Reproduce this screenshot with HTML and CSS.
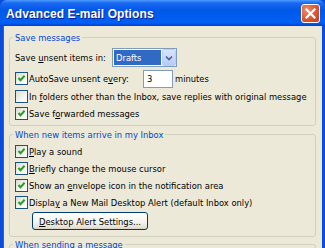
FILE: index.html
```html
<!DOCTYPE html>
<html lang="en">
<head>
    <meta charset="UTF-8">
    <meta name="viewport" content="width=device-width, initial-scale=1.0">
    <title>Advanced E-mail Options</title>
    <link rel="stylesheet" href="styles.css">
</head>
<body>
    <div class="window">
        <div class="titlebar">
            <span class="title">Advanced E-mail Options</span>
            <span class="close">
                <svg width="11" height="11" viewBox="0 0 11 11"><path d="M1.5 1.5 L9.5 9.5 M9.5 1.5 L1.5 9.5" stroke="#fff" stroke-width="2.2" stroke-linecap="square"/></svg>
            </span>
        </div>

        <div class="panel">
            <fieldset class="group group-save">
                <legend>Save messages</legend>
                <div class="row row-tall">
                    <span class="label label-folder">Save <u>u</u>nsent items in:</span>
                    <span class="combo">
                        <span class="combo-value">Drafts</span>
                        <span class="combo-arrow">
                            <svg width="8" height="6" viewBox="0 0 8 6"><path d="M1 1.5 L4 4.5 L7 1.5" fill="none" stroke="#4d6185" stroke-width="1.6"/></svg>
                        </span>
                    </span>
                </div>
                <div class="row row-tall row-gap">
                    <span class="check on"></span>
                    <span class="label label-auto">AutoSave unsent e<u>v</u>ery:</span>
                    <span class="field">3</span>
                    <span class="unit">minutes</span>
                </div>
                <div class="row">
                    <span class="check"></span>
                    <span class="label">In <u>f</u>olders other than the Inbox, save replies with original message</span>
                </div>
                <div class="row row-short">
                    <span class="check on"></span>
                    <span class="label">Save f<u>o</u>rwarded messages</span>
                </div>
            </fieldset>

            <fieldset class="group group-arrive">
                <legend>When new items arrive in my Inbox</legend>
                <div class="row">
                    <span class="check on"></span>
                    <span class="label"><u>P</u>lay a sound</span>
                </div>
                <div class="row">
                    <span class="check on"></span>
                    <span class="label"><u>B</u>riefly change the mouse cursor</span>
                </div>
                <div class="row">
                    <span class="check on"></span>
                    <span class="label">Show an <u>e</u>nvelope icon in the notification area</span>
                </div>
                <div class="row">
                    <span class="check on"></span>
                    <span class="label">Displa<u>y</u> a New Mail Desktop Alert (default Inbox only)</span>
                </div>
                <button class="btn"><u>D</u>esktop Alert Settings...</button>
            </fieldset>

            <fieldset class="group group-send">
                <legend>When sending a message</legend>
            </fieldset>
        </div>
    </div>
</body>
</html>
```

FILE: styles.css
```css
body {
    margin: 0;
    font-family: "DejaVu Sans Condensed", "DejaVu Sans", sans-serif;
    font-stretch: condensed;
    font-size: 9.3px;
    color: #000;
    background: #ece9d8;
}
.window {
    width: 325px;
    height: 248px;
    overflow: hidden;
    background: #0a4ddc;
}
.titlebar {
    height: 26px;
    display: flex;
    align-items: center;
    justify-content: space-between;
    padding: 0 5px 0 6px;
    border-radius: 7px 7px 0 0;
    background: linear-gradient(to bottom, #4a9cff 0%, #1a68f0 12%, #0058e6 40%, #0060f5 85%, #0057e8 92%, #003dcf 100%);
}
.title {
    font-family: "Liberation Sans", Arial, sans-serif;
    font-stretch: normal;
    font-weight: bold;
    font-size: 12px;
    letter-spacing: 0.1px;
    color: #fff;
    padding-top: 1px;
    text-shadow: 1px 1px 0 #0f1a8a;
}
.close {
    width: 19px;
    height: 19px;
    box-sizing: border-box;
    border: 1px solid #fff;
    border-radius: 3px;
    display: flex;
    align-items: center;
    justify-content: center;
    background: radial-gradient(circle at 30% 30%, #ee8a6a, #e0552f 55%, #c43a16);
}
.panel {
    height: 222px;
    margin: 0 3px;
    background: #ece9d8;
    padding-top: 5px;
    box-sizing: border-box;
    border-left: 1px solid #2a5ed8;
}
.group {
    margin: 0 6px 0 5px;
    padding: 4px 5px 4px 5px;
    border: 1px solid #d0d0bf;
    border-radius: 3px;
    min-width: 0;
}
.group legend {
    color: #0046d5;
    line-height: 13px;
    padding: 0 2px;
    margin-left: -2px;
}
.group-arrive {
    margin-top: 2px;
    padding-top: 2px;
    padding-bottom: 6px;
}
.group-send {
    margin-top: 1px;
    height: 40px;
}
.row {
    display: flex;
    align-items: center;
    height: 17px;
    white-space: nowrap;
}
.row-tall {
    height: 19px;
}
.row-gap {
    margin-top: 2px;
}
.row-short {
    height: 16px;
}
.label-folder {
    width: 97px;
}
.label-auto {
    width: 114px;
}
.check {
    width: 13px;
    height: 13px;
    box-sizing: border-box;
    flex: none;
    margin-right: 1px;
    border: 1px solid #1c5180;
    background: linear-gradient(135deg, #dcdcd7, #f4f4f0 60%, #fff);
}
.check.on {
    background: url("data:image/svg+xml;utf8,<svg xmlns='http://www.w3.org/2000/svg' width='11' height='11'><path d='M2.5 5 L4.5 7.2 L8.6 2.8' fill='none' stroke='%2321a121' stroke-width='2'/></svg>") no-repeat center, linear-gradient(135deg, #dcdcd7, #f4f4f0 60%, #fff);
}
.combo {
    width: 65px;
    height: 19px;
    box-sizing: border-box;
    border: 1px solid #7f9db9;
    background: #fff;
    display: flex;
    padding: 1px;
    gap: 1px;
}
.combo-value {
    flex: 1;
    background: #316ac5;
    color: #fff;
    padding-left: 2px;
    line-height: 15px;
}
.combo-arrow {
    width: 14px;
    margin: -1px -1px -1px 0;
    box-sizing: border-box;
    border: 1px solid #b9cff9;
    border-radius: 2px;
    background: linear-gradient(to bottom, #d9e5fd, #b6cbf7);
    display: flex;
    align-items: center;
    justify-content: center;
}
.field {
    width: 30px;
    height: 18px;
    box-sizing: border-box;
    border: 1px solid #7f9db9;
    background: #fff;
    padding-left: 3px;
    line-height: 16px;
}
.unit {
    margin-left: 2px;
}
.btn {
    display: block;
    margin: 1px 0 0 17px;
    width: 116px;
    height: 18px;
    padding: 0;
    font: inherit;
    color: #000;
    border: 1px solid #003c74;
    border-radius: 3px;
    background: linear-gradient(to bottom, #fff, #f3f2ec 60%, #e3e0d4 90%, #d6d0c5);
}
```
